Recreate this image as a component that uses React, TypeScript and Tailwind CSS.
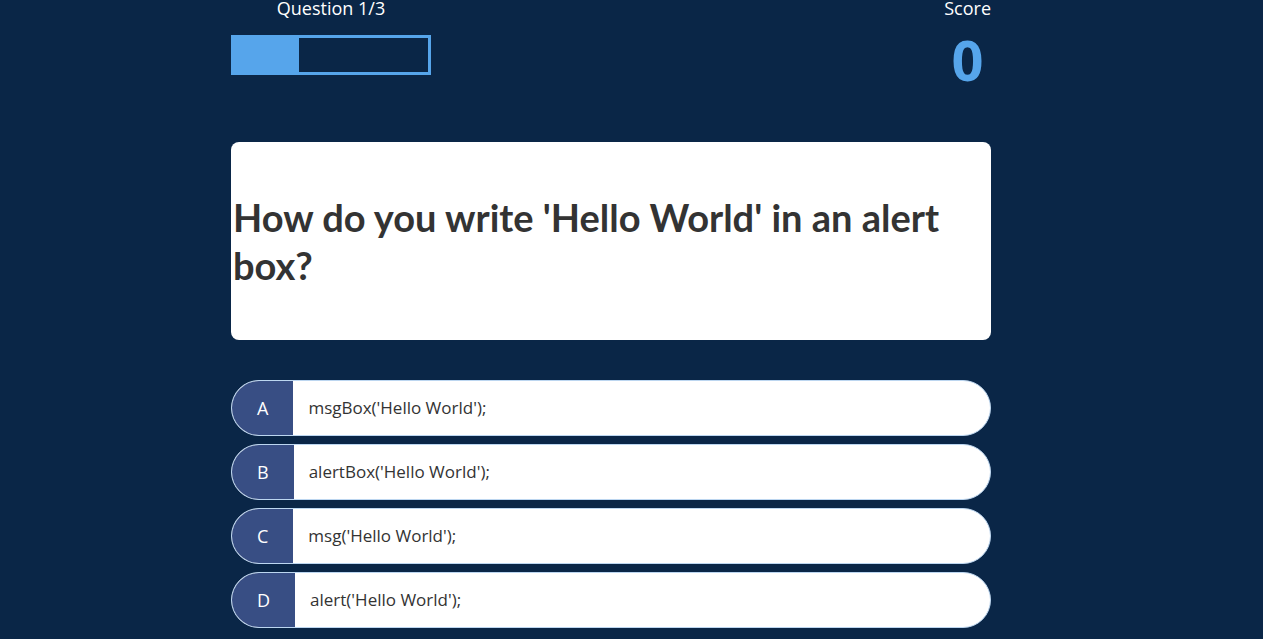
const CHOICES = [
  { letter: 'A', text: "msgBox('Hello World');" },
  { letter: 'B', text: "alertBox('Hello World');" },
  { letter: 'C', text: "msg('Hello World');" },
  { letter: 'D', text: "alert('Hello World');" },
]

export default function App() {
  const progress = (1 / 3) * 100

  return (
    <div className="min-h-screen bg-[#0a2647] text-white font-['Open_Sans',sans-serif]">
      <div className="w-[760px] ml-[231px]">
        {/* HUD */}
        <div className="flex justify-between h-[142px]">
          <div className="w-[200px] flex flex-col items-center">
            <p className="text-[18px] leading-[20px] -mt-[2px]">Question 1/3</p>
            <div className="w-[200px] h-[40px] border-[3px] border-[#56a5eb] mt-[17px]">
              <div className="h-full bg-[#56a5eb]" style={{ width: `${progress}%` }} />
            </div>
          </div>
          <div className="flex flex-col items-center">
            <p className="text-[18px] leading-[20px] -mt-[2px]">Score</p>
            <p className="text-[56px] leading-[42px] font-bold text-[#56a5eb] mt-[20px]">0</p>
          </div>
        </div>

        {/* Question */}
        <div className="bg-white rounded-lg h-[198px] flex items-center">
          <h2 className="text-[#333] text-[38px] leading-[48px] font-bold font-['Lato',sans-serif] pl-[2px] pr-[40px]">
            How do you write 'Hello World' in an alert box?
          </h2>
        </div>

        {/* Choices */}
        <div className="mt-[40px] flex flex-col gap-[8px]">
          {CHOICES.map(c => (
            <div
              key={c.letter}
              className="flex h-[56px] bg-white border border-[#bcd6f0] rounded-full overflow-hidden"
            >
              <div className="bg-[#384e84] px-[25px] flex items-center text-[18px]">{c.letter}</div>
              <div className="flex items-center pl-[15px] text-[17px] text-[#333]">{c.text}</div>
            </div>
          ))}
        </div>
      </div>
    </div>
  )
}
